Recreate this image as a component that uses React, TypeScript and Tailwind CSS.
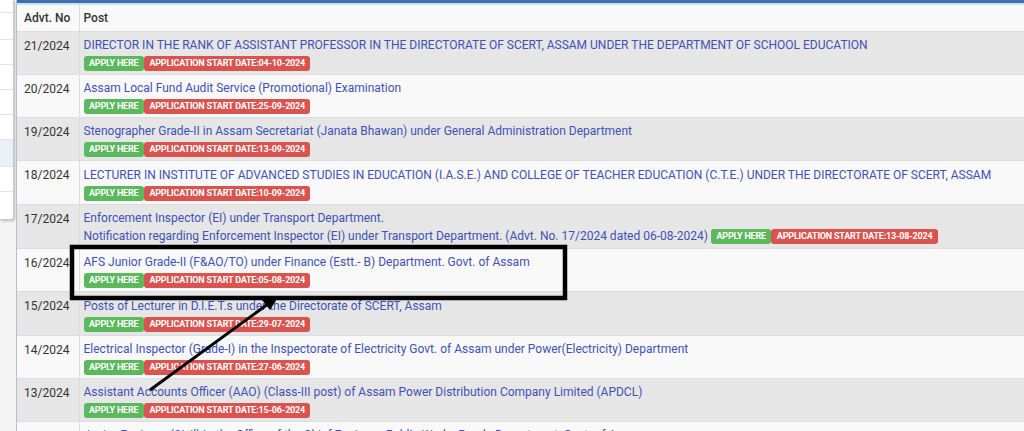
type Post = {
    no: string;
    title: string;
    note?: string;
    date: string;
};

const posts: Post[] = [
    { no: '21/2024', title: 'DIRECTOR IN THE RANK OF ASSISTANT PROFESSOR IN THE DIRECTORATE OF SCERT, ASSAM UNDER THE DEPARTMENT OF SCHOOL EDUCATION', date: '04-10-2024' },
    { no: '20/2024', title: 'Assam Local Fund Audit Service (Promotional) Examination', date: '25-09-2024' },
    { no: '19/2024', title: 'Stenographer Grade-II in Assam Secretariat (Janata Bhawan) under General Administration Department', date: '13-09-2024' },
    { no: '18/2024', title: 'LECTURER IN INSTITUTE OF ADVANCED STUDIES IN EDUCATION (I.A.S.E.) AND COLLEGE OF TEACHER EDUCATION (C.T.E.) UNDER THE DIRECTORATE OF SCERT, ASSAM', date: '10-09-2024' },
    {
        no: '17/2024',
        title: 'Enforcement Inspector (EI) under Transport Department.',
        note: 'Notification regarding Enforcement Inspector (EI) under Transport Department. (Advt. No. 17/2024 dated 06-08-2024)',
        date: '13-08-2024',
    },
    { no: '16/2024', title: 'AFS Junior Grade-II (F&AO/TO) under Finance (Estt.- B) Department. Govt. of Assam', date: '05-08-2024' },
    { no: '15/2024', title: 'Posts of Lecturer in D.I.E.T.s under the Directorate of SCERT, Assam', date: '29-07-2024' },
    { no: '14/2024', title: 'Electrical Inspector (Grade-I) in the Inspectorate of Electricity Govt. of Assam under Power(Electricity) Department', date: '27-06-2024' },
    { no: '13/2024', title: 'Assistant Accounts Officer (AAO) (Class-III post) of Assam Power Distribution Company Limited (APDCL)', date: '15-06-2024' },
    { no: '12/2024', title: 'Junior Engineer (Civil) in the Office of the Chief Engineer, Public Works Roads Department, Govt. of Assam', date: '10-06-2024' },
];

function Badges({ date }: { date: string }) {
    return (
        <span className="inline-flex items-center align-middle h-[15px] text-[9px] font-bold text-white leading-none tracking-[-0.2px]">
            <span className="bg-[#5cb85c] rounded-[3px] h-full px-[5.5px] flex items-center">APPLY HERE</span>
            <span className="bg-[#d9534f] rounded-[3px] h-full px-[5.5px] flex items-center">APPLICATION START DATE:{date}</span>
        </span>
    );
}

export default function App() {
    return (
        <div className="relative w-[1024px] h-[431px] overflow-hidden flex bg-white font-['Roboto',sans-serif]">
            {/* Dropdown behind the table */}
            <div className="w-[16px] shrink-0 bg-[#f4f4f4]">
                <div className="w-[14px] h-[220px] bg-white border-r border-b border-[#c8c8c8] rounded-br-[3px] shadow-[1px_1px_3px_rgba(0,0,0,0.25)] flex flex-col">
                    <div className="h-[13px] shrink-0 border-b border-[#e3e3e3]" />
                    <div className="h-[27px] shrink-0 border-b border-[#e3e3e3]" />
                    <div className="h-[25px] shrink-0 border-b border-[#e3e3e3]" />
                    <div className="h-[25px] shrink-0 border-b border-[#e3e3e3]" />
                    <div className="h-[25px] shrink-0 border-b border-[#e3e3e3]" />
                    <div className="h-[25px] shrink-0 border-b border-[#e3e3e3]" />
                    <div className="h-[27px] shrink-0 bg-[#e8f0f8] border-b border-[#e3e3e3]" />
                    <div className="h-[25px] shrink-0 border-b border-[#e3e3e3]" />
                </div>
            </div>

            <div className="flex-1 min-w-0 flex flex-col border-l border-[#b4c0cc] bg-[#f9f9f9]">
                <div className="h-[3px] shrink-0 bg-[#3d70ad]" />
                <div className="h-[2px] shrink-0 bg-[#cfe0f0]" />
                <table className="w-full shrink-0 border-collapse text-[12px] text-[#333]">
                    <thead>
                        <tr className="h-[26px] bg-[#f9f9f9]">
                            <th className="w-[62px] pl-[7px] text-left font-medium">Advt. No</th>
                            <th className="pl-[4px] text-left font-medium border-l border-[#dddddd]">Post</th>
                        </tr>
                    </thead>
                    <tbody>
                        {posts.map((p, i) => (
                            <tr key={p.no} className={`border-t border-[#dddddd] ${i % 2 === 0 ? 'bg-[#e6e6e6]' : 'bg-[#f9f9f9]'}`}>
                                <td className="align-top pl-[7px] pt-[6px] leading-[17px] whitespace-nowrap">{p.no}</td>
                                <td className="align-top pl-[4px] pt-[5.3px] pb-[3px] border-l border-[#dddddd] leading-[17px] text-[#3f51b5] whitespace-nowrap">
                                    <div>{p.title}</div>
                                    {p.note ? (
                                        <div className="leading-[18px]">
                                            {p.note} <Badges date={p.date} />
                                        </div>
                                    ) : (
                                        <div className="mt-[2px] flex">
                                            <Badges date={p.date} />
                                        </div>
                                    )}
                                </td>
                            </tr>
                        ))}
                    </tbody>
                </table>
            </div>

            {/* Annotation: highlight box and arrow */}
            <svg className="absolute inset-0 pointer-events-none" width="1024" height="431">
                <rect x="72" y="247" width="493" height="51" fill="none" stroke="#000" strokeWidth="4.5" />
                <line x1="150" y1="390" x2="268" y2="304" stroke="#000" strokeWidth="3" />
                <polygon points="278,297 262,300 270,310" fill="#000" />
            </svg>
        </div>
    );
}
